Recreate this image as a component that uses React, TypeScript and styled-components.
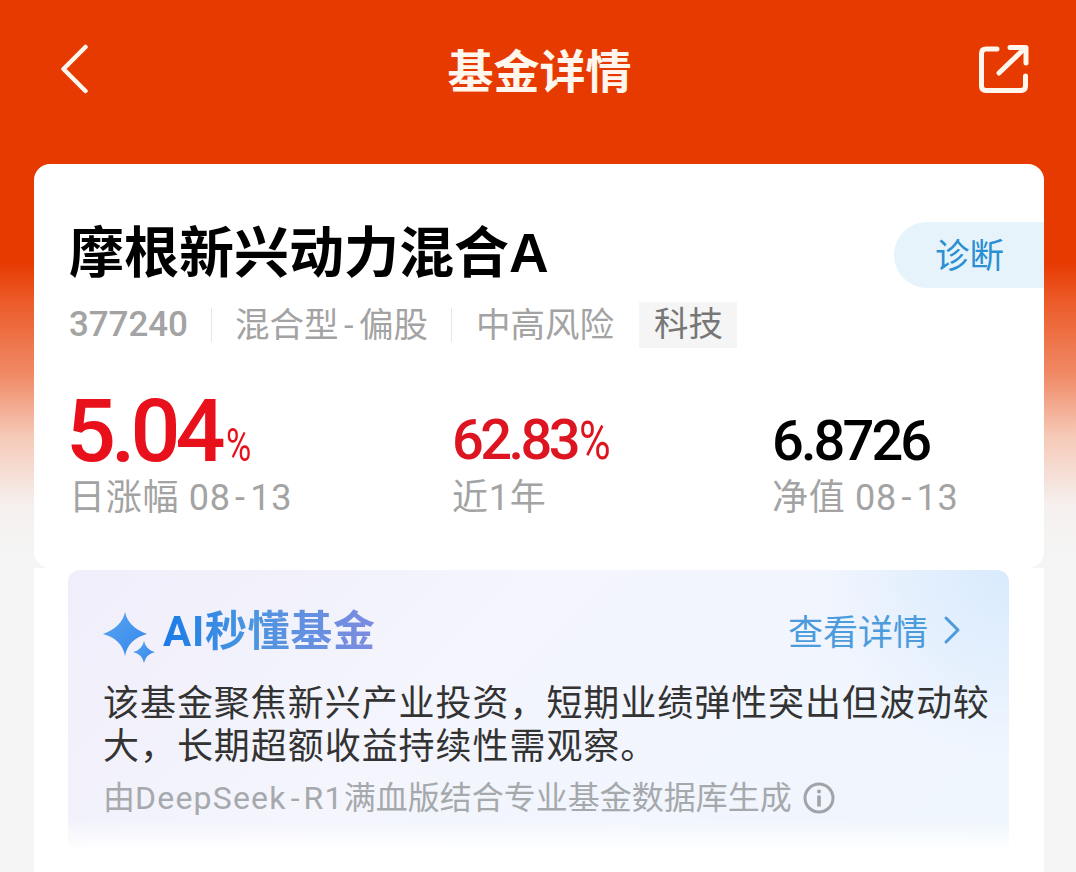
import React from "react";
import styled, { createGlobalStyle } from "styled-components";

const Global = createGlobalStyle`
  html, body { margin: 0; padding: 0; background: #f5f5f5; }
  * { box-sizing: border-box; }
  body { font-family: Roboto, "Noto Sans CJK SC", sans-serif; }
`;

const Page = styled.div`
  width: 1076px;
  height: 872px;
  overflow: hidden;
  padding-left: 34px;
  padding-right: 32px;
  background: linear-gradient(180deg, #e63a00 0, #e63a00 262px, #ec5a28 300px, #f08a66 375px, #f6c8b6 435px, #f5f0ee 505px, #f5f5f5 560px);
`;

const Header = styled.header`
  height: 164px;
  margin: 0 -32px 0 -34px;
  padding: 44px 47px 0 60px;
  display: flex;
  justify-content: space-between;
  align-items: flex-start;
`;

const HeaderTitle = styled.h1`
  margin: 0 0 0 10px;
  color: #fff6ee;
  font: 700 46px/48px "Noto Sans CJK SC", sans-serif;
`;

const Card = styled.section`
  position: relative;
  height: 404px;
  padding: 54px 0 0 35px;
  background: #fff;
  border-radius: 16px;
`;

const FundName = styled.h2`
  margin: 0;
  color: #000;
  font: 700 55px/70px "Liberation Sans", "Noto Sans CJK SC", sans-serif;
`;

const DiagnosePill = styled.div`
  position: absolute;
  top: 58px;
  right: 0;
  width: 150px;
  height: 66px;
  padding-left: 41px;
  border-radius: 33px 0 0 33px;
  background: #e6f3fb;
  color: #2b8fd1;
  font: 400 34.5px/62px "Noto Sans CJK SC", sans-serif;
`;

const MetaRow = styled.div`
  margin-top: 14px;
  height: 46px;
  display: flex;
  align-items: center;
  color: #a3a3a3;
  font: 400 34.5px/44px Roboto, "Noto Sans CJK SC", sans-serif;
`;

const FundCode = styled.span`
  width: 142px;
  font-weight: 500;
  font-size: 35px;
  letter-spacing: -0.1px;
`;

const MetaItem = styled.span<{ $w: number; $pad: number }>`
  width: ${(p) => p.$w}px;
  position: relative;
  padding-left: ${(p) => p.$pad}px;
  white-space: nowrap;
  &::before {
    content: "";
    position: absolute;
    left: 0;
    top: 5px;
    height: 34px;
    width: 1px;
    background: #e6e6e6;
  }
`;

const Dash = styled.span<{ $gap: number }>`
  margin: 0 ${(p) => p.$gap}px;
`;

const Tag = styled.span`
  width: 98px;
  height: 46px;
  padding-left: 15px;
  background: #f5f5f5;
  color: #777;
`;

const Stats = styled.div`
  margin-top: 39px;
  display: flex;
`;

const Stat = styled.div<{ $w: number }>`
  width: ${(p) => p.$w}px;
  display: flex;
  flex-direction: column;
  height: 134px;
  justify-content: flex-end;
`;

const Value = styled.div<{ $color: string }>`
  color: ${(p) => p.$color};
  font: 500 56px/60px Roboto, sans-serif;
  letter-spacing: -2.9px;
  white-space: nowrap;
`;

const BigValueRow = styled(Value)`
  margin-bottom: -4px;
`;

const RedValue = styled.span`
  letter-spacing: -3.6px;
`;

const BigValue = styled.span`
  margin-left: -3px;
  font-size: 88px;
  line-height: 64px;
  letter-spacing: -5px;
`;

const BigUnit = styled.span`
  display: inline-block;
  margin-left: 5px;
  font-size: 46px;
  font-weight: 400;
  letter-spacing: 0;
  transform: scaleX(0.75);
  transform-origin: left center;
`;

const SmallUnit = styled.span`
  display: inline-block;
  margin-left: 2px;
  font-size: 54px;
  font-weight: 400;
  letter-spacing: 0;
  transform: scaleX(0.8);
  transform-origin: left center;
`;

const StatLabel = styled.div`
  margin-top: 4px;
  color: #a3a3a3;
  font: 400 36px/46px Roboto, "Noto Sans CJK SC", sans-serif;
  letter-spacing: 0.7px;
  white-space: nowrap;
`;

const Lower = styled.section`
  height: 320px;
  padding: 2px 35px 0 34px;
  background: #fff;
`;

const AiBox = styled.div`
  height: 278px;
  padding: 38px 19px 0 35px;
  border-radius: 12px 12px 0 0;
  background:
    linear-gradient(180deg, rgba(255,255,255,0) 0, rgba(255,255,255,0) 250px, #fff 280px),
    radial-gradient(circle at 100% 0, #d8eafd 0, rgba(216,234,253,0) 190px),
    linear-gradient(135deg, #f0eefa 0, #f4f5fd 40%, #eff6fe 100%);
`;

const AiHead = styled.div`
  display: flex;
  align-items: center;
  justify-content: space-between;
  height: 48px;
  padding-right: 29px;
`;

const AiTitleWrap = styled.div`
  display: flex;
  align-items: center;
`;

const SparkIcon = styled.svg`
  margin-top: 10px;
`;

const AiTitle = styled.span`
  font: 700 42px/48px Roboto, "Noto Sans CJK SC", sans-serif;
  letter-spacing: 0.7px;
  background: linear-gradient(90deg, #1a7be8 0, #4a95e0 40%, #7f8be0 100%);
  -webkit-background-clip: text;
  background-clip: text;
  color: transparent;
`;

const DetailLink = styled.span`
  display: flex;
  align-items: center;
  gap: 15px;
  margin-top: -4px;
  color: #4c9bdc;
  font: 400 35px/48px "Noto Sans CJK SC", sans-serif;
`;

const Summary = styled.p`
  margin: 23px 0 0;
  color: #333;
  font: 400 36px/43px "Noto Sans CJK SC", sans-serif;
  letter-spacing: 0.95px;
`;

const Source = styled.div`
  margin-top: 11px;
  display: flex;
  align-items: center;
  gap: 11px;
  color: #a6a9ac;
  font: 400 32px/44px Roboto, "Noto Sans CJK SC", sans-serif;
  white-space: nowrap;
`;

const LatinRun = styled.span`
  letter-spacing: 1.2px;
`;

export default function App() {
  return (
    <Page>
      <Global />
      <Header>
        <svg width="30" height="50" viewBox="0 0 30 50" fill="none">
          <path d="M25.5 3 L3.5 25 L25.5 47" stroke="#fff6ee" strokeWidth="4.5" strokeLinecap="round" strokeLinejoin="round" />
        </svg>
        <HeaderTitle>基金详情</HeaderTitle>
        <svg width="50" height="50" viewBox="0 0 50 50" fill="none" stroke="#fff6ee" strokeWidth="5" strokeLinecap="round" strokeLinejoin="round">
          <path d="M18 5 H7 Q2.5 5 2.5 9.5 V42 Q2.5 46.5 7 46.5 H42 Q46.5 46.5 46.5 42 V32" />
          <path d="M20 29 L45 5" />
          <path d="M31 3.5 H47 V19" />
        </svg>
      </Header>
      <Card>
        <FundName>摩根新兴动力混合A</FundName>
        <DiagnosePill>诊断</DiagnosePill>
        <MetaRow>
          <FundCode>377240</FundCode>
          <MetaItem $w={240} $pad={24}>
            混合型<Dash $gap={5.5}>-</Dash>偏股
          </MetaItem>
          <MetaItem $w={188} $pad={25}>中高风险</MetaItem>
          <Tag>科技</Tag>
        </MetaRow>
        <Stats>
          <Stat $w={383}>
            <BigValueRow $color="#e8101a">
              <BigValue>5.04</BigValue>
              <BigUnit>%</BigUnit>
            </BigValueRow>
            <StatLabel>
              日涨幅 08<Dash $gap={4.5}>-</Dash>13
            </StatLabel>
          </Stat>
          <Stat $w={320}>
            <Value $color="#dc1521">
              <RedValue>62.83</RedValue>
              <SmallUnit>%</SmallUnit>
            </Value>
            <StatLabel>近1年</StatLabel>
          </Stat>
          <Stat $w={240}>
            <Value $color="#000">6.8726</Value>
            <StatLabel>
              净值 08<Dash $gap={4.5}>-</Dash>13
            </StatLabel>
          </Stat>
        </Stats>
      </Card>
      <Lower>
        <AiBox>
          <AiHead>
            <AiTitleWrap>
              <SparkIcon width="60" height="52" viewBox="0 0 60 52">
                <defs>
                  <linearGradient id="spark" x1="0" y1="0" x2="1" y2="1">
                    <stop offset="0" stopColor="#58a6f2" />
                    <stop offset="1" stopColor="#3585ea" />
                  </linearGradient>
                </defs>
                <path d="M22 1 Q25 16 44 23 Q25 28 22 45 Q19 28 0 23 Q19 16 22 1 Z" fill="url(#spark)" />
                <path d="M41 30 Q43 39 52 41 Q43 43 41 52 Q39 43 30 41 Q39 39 41 30 Z" fill="url(#spark)" />
              </SparkIcon>
              <AiTitle>AI秒懂基金</AiTitle>
            </AiTitleWrap>
            <DetailLink>
              查看详情
              <svg width="18" height="30" viewBox="0 0 18 30" fill="none">
                <path d="M3 3 L15 15 L3 27" stroke="#4c9bdc" strokeWidth="3" strokeLinecap="round" strokeLinejoin="round" />
              </svg>
            </DetailLink>
          </AiHead>
          <Summary>该基金聚焦新兴产业投资，短期业绩弹性突出但波动较大，长期超额收益持续性需观察。</Summary>
          <Source>
            <span>
              由<LatinRun>DeepSeek</LatinRun>
              <Dash $gap={4}>-</Dash>
              <LatinRun>R1</LatinRun>满血版结合专业基金数据库生成
            </span>
            <svg width="32" height="32" viewBox="0 0 32 32" fill="none">
              <circle cx="16" cy="16" r="14" stroke="#a0a4a6" strokeWidth="3" />
              <circle cx="16" cy="9.5" r="2" fill="#a0a4a6" />
              <rect x="14.2" y="13.5" width="3.6" height="11" fill="#a0a4a6" />
            </svg>
          </Source>
        </AiBox>
      </Lower>
    </Page>
  );
}
